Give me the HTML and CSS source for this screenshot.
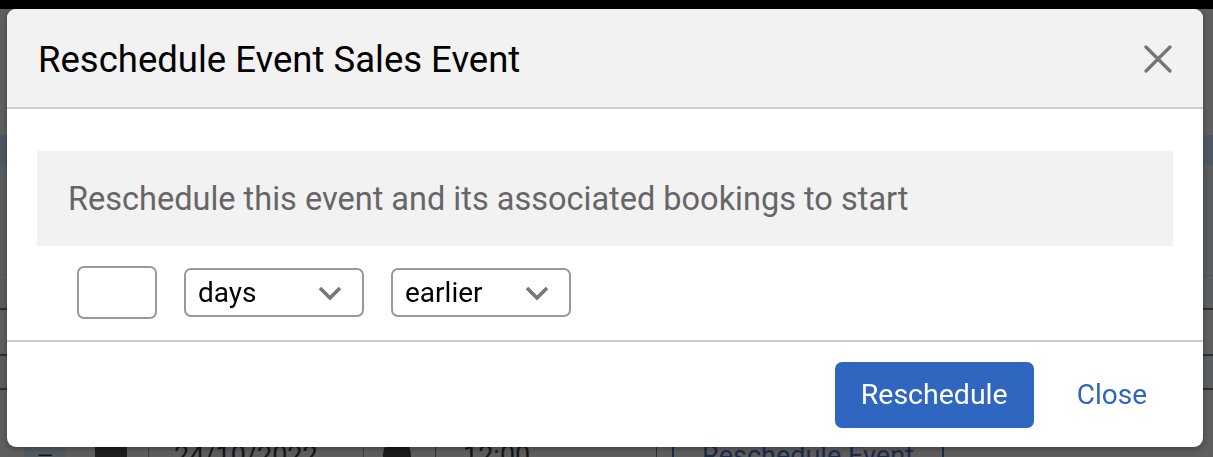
FILE: index.html
```html
<!DOCTYPE html>
<html lang="en">
<head>
  <meta charset="UTF-8" />
  <meta name="viewport" content="width=device-width, initial-scale=1.0"/>
  <link rel="stylesheet" href="styles.css">
</head>
<body>

  <div class="page">
    <div class="topbar"></div>
    <div class="row row-plain"></div>
    <div class="row row-blue"></div>
    <div class="row row-tall"></div>
    <div class="row row-line"></div>
    <div class="row row-line row-mid"></div>
    <div class="row row-line"></div>
    <div class="row row-tools">
      <div class="tools">
        <span class="tool tool-menu">&#8212;</span>
        <span class="tool tool-square"></span>
        <span class="tool tool-date">24/10/2022 <span class="tool-caret">&#8964;</span></span>
        <span class="tool tool-clock"></span>
        <span class="tool tool-time">12:00</span>
        <span class="tool tool-btn">Reschedule Event</span>
      </div>
    </div>
  </div>

  <div class="modal">
    <div class="modal-header">
      <h2 class="modal-title">Reschedule Event Sales Event</h2>
      <button class="modal-close" aria-label="Close">
        <svg width="28" height="28" viewBox="0 0 28 28">
          <path d="M2 2 L26 26 M26 2 L2 26" stroke="#757575" stroke-width="3.2" stroke-linecap="round" fill="none"/>
        </svg>
      </button>
    </div>

    <div class="modal-body">
      <div class="notice">Reschedule this event and its associated bookings to start</div>
      <div class="fields">
        <input class="field-num" type="text" value="">
        <div class="select">
          <span>days</span>
          <svg width="24" height="15" viewBox="0 0 24 15">
            <path d="M2 2 L12 12 L22 2" stroke="#777" stroke-width="3.6" fill="none"/>
          </svg>
        </div>
        <div class="select">
          <span>earlier</span>
          <svg width="24" height="15" viewBox="0 0 24 15">
            <path d="M2 2 L12 12 L22 2" stroke="#777" stroke-width="3.6" fill="none"/>
          </svg>
        </div>
      </div>
    </div>

    <div class="modal-footer">
      <button class="btn-primary">Reschedule</button>
      <button class="btn-link">Close</button>
    </div>
  </div>

</body>
</html>
```

FILE: styles.css
```css
* {
  margin: 0;
  padding: 0;
  box-sizing: border-box;
}

html, body {
  width: 100%;
  height: 100%;
  overflow: hidden;
  font-family: Roboto, "Liberation Sans", sans-serif;
}

body {
  background: #5d5f61;
}

/* page behind the dialog */
.topbar {
  height: 9px;
  background: #000;
}

.row {
  background: #5e5f60;
}

.row-plain {
  height: 126px;
  background: #5f5f5f;
}

.row-blue {
  height: 30px;
  background: #4f5862;
}

.row-tall {
  height: 111px;
  background: #5a5d60;
  border-bottom: 1px solid #525456;
}

.row-line {
  height: 34px;
  background: #5b5e60;
  border-bottom: 2px solid #2e2e2e;
}

.row-mid {
  height: 46px;
  background: #5f5f5f;
}

.row-tools {
  height: 80px;
  background: #5e5e5e;
  padding: 48px 0 0 24px;
}

.tools {
  display: flex;
  align-items: center;
  height: 36px;
  color: #161616;
  font-size: 27px;
}

.tool {
  display: flex;
  align-items: center;
  height: 36px;
}

.tool-menu {
  width: 42px;
  justify-content: center;
  background: #545b61;
  font-size: 20px;
}

.tool-square {
  width: 32px;
  margin-left: 29px;
  background: #1e1e1e;
}

.tool-date {
  margin-left: 21px;
  padding-left: 25px;
  width: 216px;
  border-left: 1px solid #3e3e3e;
  border-right: 1px solid #3e3e3e;
}

.tool-caret {
  margin-left: 4px;
  color: #333;
}

.tool-clock {
  width: 28px;
  margin-left: 19px;
  background: #1a1a1a;
  border-radius: 50%;
}

.tool-time {
  margin-left: 24px;
  width: 222px;
  padding-left: 27px;
  border-left: 1px solid #2e2e2e;
  border-right: 1px solid #2e2e2e;
}

.tool-btn {
  margin-left: 15px;
  padding: 0 28px;
  color: #1c2a4a;
  border-left: 2px solid #1c2a4a;
  border-right: 2px solid #1c2a4a;
}

/* dialog */
.modal {
  position: fixed;
  top: 9px;
  left: 7px;
  width: 1196px;
  height: 438px;
  background: #fff;
  border-radius: 9px;
  overflow: hidden;
  display: flex;
  flex-direction: column;
  box-shadow: 0 2px 6px rgba(0, 0, 0, 0.3);
}

.modal-header {
  height: 100px;
  flex: none;
  background: #f2f2f2;
  border-bottom: 2px solid #cccccc;
  display: flex;
  align-items: center;
  justify-content: space-between;
  padding: 2px 31px 0 31px;
}

.modal-title {
  font-size: 36.5px;
  font-weight: 400;
  color: #000;
}

.modal-close {
  border: none;
  background: none;
  width: 28px;
  height: 28px;
  display: flex;
  cursor: pointer;
}

.modal-body {
  flex: 1;
  padding: 42px 30px 0 30px;
  border-bottom: 2px solid #cccccc;
}

.notice {
  height: 95px;
  background: #f2f2f2;
  color: #666;
  font-size: 32.5px;
  display: flex;
  align-items: center;
  padding: 0 31px 0 31px;
}

.fields {
  display: flex;
  align-items: center;
  gap: 27px;
  padding: 20px 0 0 40px;
}

.field-num {
  width: 80px;
  height: 53px;
  border: 2px solid #999;
  border-radius: 7px;
  outline: none;
}

.select {
  width: 180px;
  height: 49px;
  border: 2px solid #999;
  border-radius: 7px;
  display: flex;
  align-items: center;
  justify-content: space-between;
  padding: 0 20px 0 12px;
  font-size: 28px;
  color: #000;
}

.select svg {
  margin-top: 2px;
}

.modal-footer {
  height: 105px;
  flex: none;
  display: flex;
  align-items: center;
  justify-content: flex-end;
  padding: 0 56px 0 0;
  gap: 43px;
}

.btn-primary {
  width: 199px;
  height: 66px;
  border: none;
  border-radius: 7px;
  background: #2f66c0;
  color: #fff;
  font-family: inherit;
  font-size: 28.5px;
  cursor: pointer;
}

.btn-link {
  border: none;
  background: none;
  color: #2f66c0;
  font-family: inherit;
  font-size: 28px;
  cursor: pointer;
}
```
